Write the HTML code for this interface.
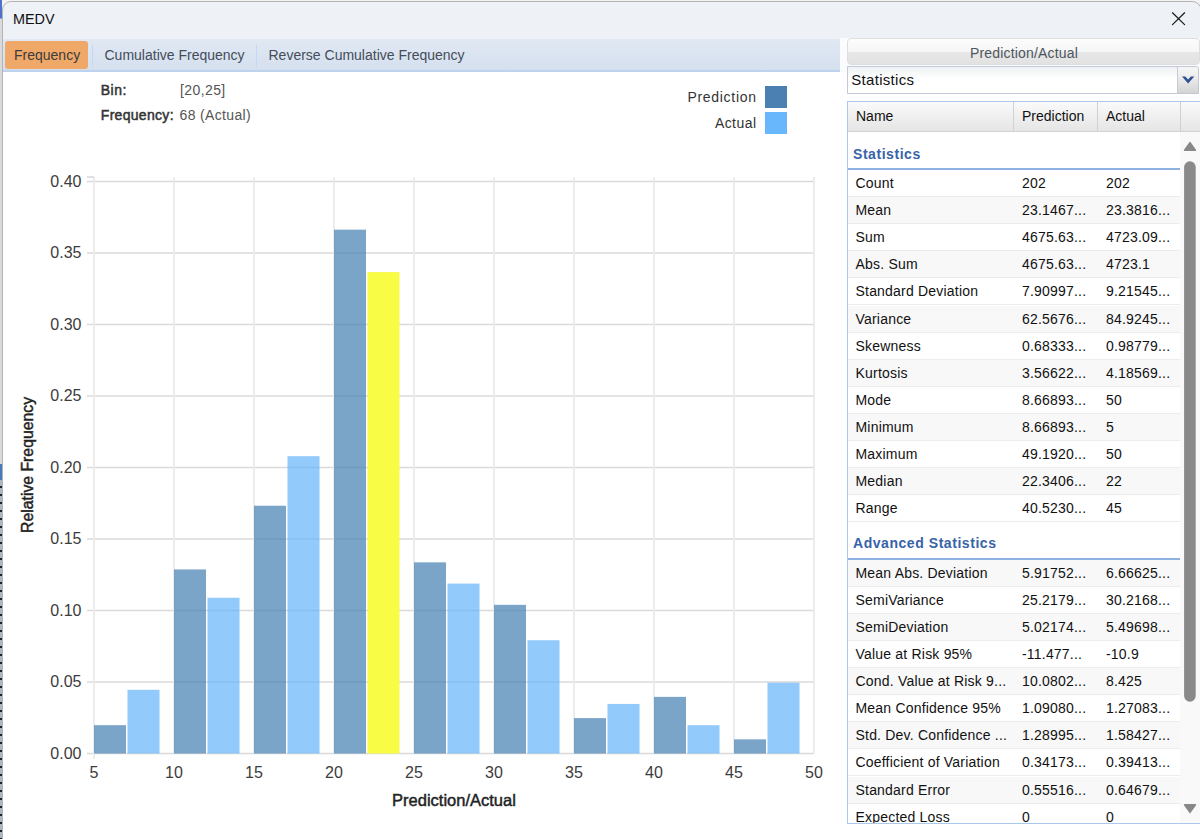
<!DOCTYPE html>
<html><head><meta charset="utf-8"><style>
html,body{margin:0;padding:0;width:1200px;height:839px;overflow:hidden;background:#fff}
body{position:relative;font-family:"Liberation Sans",sans-serif}
.t{position:absolute;white-space:nowrap}
.r{position:absolute}
</style></head><body>
<div class="r" style="left:0px;top:0px;width:1200px;height:839px;background:#f3f3f3;"></div>
<div class="r" style="left:0px;top:0px;width:2px;height:464px;background:linear-gradient(#5070d0 0px,#5070d0 18px,#dadada 19px);"></div>
<div class="r" style="left:0px;top:464px;width:2px;height:16px;background:#4a78b8;"></div>
<div class="r" style="left:0px;top:480px;width:2px;height:359px;background:repeating-linear-gradient(#a9b6c8 0px,#a9b6c8 6px,#222 6px,#222 8px);"></div>
<div class="r" style="left:2px;top:1px;width:1200px;height:850px;background:#eef2f7;border:1px solid #b4b4b4;border-radius:9px 10px 0 0;box-sizing:border-box;"></div>
<div class="t" style="left:12.5px;top:9.43px;font-size:15.5px;line-height:19px;color:#111;font-weight:normal;transform:scaleX(0.93);transform-origin:0 0;">MEDV</div>
<svg class="r" style="left:1170px;top:10px" width="18" height="18" viewBox="0 0 18 18"><path d="M2.5 2.8 L14.6 14.6 M14.6 2.8 L2.5 14.6" stroke="#1a1a1a" stroke-width="1.25" stroke-linecap="round" fill="none"/></svg>
<div class="r" style="left:3px;top:72px;width:1197px;height:767px;background:#fff;"></div>
<div class="r" style="left:840px;top:38px;width:360px;height:34px;background:#fbfcfd;"></div>
<div class="r" style="left:3px;top:39px;width:837px;height:33px;background:linear-gradient(#e0e8f3,#d5e0ef);border-bottom:2px solid #bdd2ec;box-sizing:border-box;"></div>
<div class="r" style="left:5px;top:41px;width:83px;height:28px;background:#f0a868;border-radius:3px;"></div>
<div class="t" style="left:14px;top:47.35px;font-size:14px;line-height:17px;color:#3c3c3c;font-weight:normal;">Frequency</div>
<div class="r" style="left:92px;top:45px;width:1px;height:22px;background:#c4d8f0;"></div>
<div class="t" style="left:104.5px;top:47.35px;font-size:14px;line-height:17px;color:#444c58;font-weight:normal;">Cumulative Frequency</div>
<div class="r" style="left:256px;top:45px;width:1px;height:22px;background:#c4d8f0;"></div>
<div class="t" style="left:268.5px;top:47.35px;font-size:14px;line-height:17px;color:#444c58;font-weight:normal;">Reverse Cumulative Frequency</div>
<div class="t" style="left:100.8px;top:82.15px;font-size:14px;line-height:17px;color:#333;font-weight:normal;-webkit-text-stroke:0.5px #333;letter-spacing:0.45px;">Bin:</div>
<div class="t" style="left:180px;top:82.15px;font-size:14px;line-height:17px;color:#555;font-weight:normal;letter-spacing:0.4px;">[20,25]</div>
<div class="t" style="left:100.8px;top:107.15px;font-size:14px;line-height:17px;color:#333;font-weight:normal;-webkit-text-stroke:0.5px #333;letter-spacing:0.3px;">Frequency:</div>
<div class="t" style="left:179.5px;top:107.15px;font-size:14px;line-height:17px;color:#555;font-weight:normal;letter-spacing:0.35px;">68 (Actual)</div>
<div class="t" style="right:443.29999999999995px;top:88.65px;font-size:14px;line-height:17px;color:#333;font-weight:normal;letter-spacing:0.7px;">Prediction</div>
<div class="t" style="right:443.5px;top:114.65px;font-size:14px;line-height:17px;color:#333;font-weight:normal;letter-spacing:0.45px;">Actual</div>
<div class="r" style="left:765px;top:86px;width:22px;height:22px;background:#4a80b2;"></div>
<div class="r" style="left:765px;top:112px;width:22px;height:22px;background:#68b6fb;"></div>
<svg class="r" style="left:0;top:0" width="1200" height="839"><line x1="87" x2="814" y1="181.50" y2="181.50" stroke="#dadada" stroke-width="1.6"/><line x1="87" x2="814" y1="253.00" y2="253.00" stroke="#dadada" stroke-width="1.6"/><line x1="87" x2="814" y1="324.50" y2="324.50" stroke="#dadada" stroke-width="1.6"/><line x1="87" x2="814" y1="396.00" y2="396.00" stroke="#dadada" stroke-width="1.6"/><line x1="87" x2="814" y1="467.50" y2="467.50" stroke="#dadada" stroke-width="1.6"/><line x1="87" x2="814" y1="539.00" y2="539.00" stroke="#dadada" stroke-width="1.6"/><line x1="87" x2="814" y1="610.50" y2="610.50" stroke="#dadada" stroke-width="1.6"/><line x1="87" x2="814" y1="682.00" y2="682.00" stroke="#dadada" stroke-width="1.6"/><line x1="87" x2="814" y1="753.50" y2="753.50" stroke="#dadada" stroke-width="1.6"/><line x1="94" x2="94" y1="177" y2="759" stroke="#eaeaea" stroke-width="1.8"/><line x1="174" x2="174" y1="177" y2="753" stroke="#eaeaea" stroke-width="1.8"/><line x1="254" x2="254" y1="177" y2="753" stroke="#eaeaea" stroke-width="1.8"/><line x1="334" x2="334" y1="177" y2="753" stroke="#eaeaea" stroke-width="1.8"/><line x1="414" x2="414" y1="177" y2="753" stroke="#eaeaea" stroke-width="1.8"/><line x1="494" x2="494" y1="177" y2="753" stroke="#eaeaea" stroke-width="1.8"/><line x1="574" x2="574" y1="177" y2="753" stroke="#eaeaea" stroke-width="1.8"/><line x1="654" x2="654" y1="177" y2="753" stroke="#eaeaea" stroke-width="1.8"/><line x1="734" x2="734" y1="177" y2="753" stroke="#eaeaea" stroke-width="1.8"/><line x1="814" x2="814" y1="177" y2="753" stroke="#eaeaea" stroke-width="1.8"/><line x1="87" x2="94" y1="177" y2="177" stroke="#dadada" stroke-width="1.6"/><rect x="94" y="725.18" width="32" height="28.32" fill="#4682b4" fill-opacity="0.72"/><rect x="127.5" y="689.79" width="32" height="63.71" fill="#64b4fa" fill-opacity="0.7"/><rect x="174" y="569.44" width="32" height="184.06" fill="#4682b4" fill-opacity="0.72"/><rect x="207.5" y="597.76" width="32" height="155.74" fill="#64b4fa" fill-opacity="0.7"/><rect x="254" y="505.73" width="32" height="247.77" fill="#4682b4" fill-opacity="0.72"/><rect x="287.5" y="456.17" width="32" height="297.33" fill="#64b4fa" fill-opacity="0.7"/><rect x="334" y="229.64" width="32" height="523.86" fill="#4682b4" fill-opacity="0.72"/><rect x="367.5" y="272.11" width="32" height="481.39" fill="#f9fc45" fill-opacity="1"/><rect x="414" y="562.36" width="32" height="191.14" fill="#4682b4" fill-opacity="0.72"/><rect x="447.5" y="583.60" width="32" height="169.90" fill="#64b4fa" fill-opacity="0.7"/><rect x="494" y="604.84" width="32" height="148.66" fill="#4682b4" fill-opacity="0.72"/><rect x="527.5" y="640.23" width="32" height="113.27" fill="#64b4fa" fill-opacity="0.7"/><rect x="574" y="718.10" width="32" height="35.40" fill="#4682b4" fill-opacity="0.72"/><rect x="607.5" y="703.95" width="32" height="49.55" fill="#64b4fa" fill-opacity="0.7"/><rect x="654" y="696.87" width="32" height="56.63" fill="#4682b4" fill-opacity="0.72"/><rect x="687.5" y="725.18" width="32" height="28.32" fill="#64b4fa" fill-opacity="0.7"/><rect x="734" y="739.34" width="32" height="14.16" fill="#4682b4" fill-opacity="0.72"/><rect x="767.5" y="682.71" width="32" height="70.79" fill="#64b4fa" fill-opacity="0.7"/></svg>
<div class="t" style="right:1118.5px;top:171.76px;font-size:16px;line-height:19px;color:#3c3c3c;font-weight:normal;">0.40</div>
<div class="t" style="right:1118.5px;top:243.26px;font-size:16px;line-height:19px;color:#3c3c3c;font-weight:normal;">0.35</div>
<div class="t" style="right:1118.5px;top:314.76px;font-size:16px;line-height:19px;color:#3c3c3c;font-weight:normal;">0.30</div>
<div class="t" style="right:1118.5px;top:386.26px;font-size:16px;line-height:19px;color:#3c3c3c;font-weight:normal;">0.25</div>
<div class="t" style="right:1118.5px;top:457.76px;font-size:16px;line-height:19px;color:#3c3c3c;font-weight:normal;">0.20</div>
<div class="t" style="right:1118.5px;top:529.26px;font-size:16px;line-height:19px;color:#3c3c3c;font-weight:normal;">0.15</div>
<div class="t" style="right:1118.5px;top:600.76px;font-size:16px;line-height:19px;color:#3c3c3c;font-weight:normal;">0.10</div>
<div class="t" style="right:1118.5px;top:672.26px;font-size:16px;line-height:19px;color:#3c3c3c;font-weight:normal;">0.05</div>
<div class="t" style="right:1118.5px;top:743.76px;font-size:16px;line-height:19px;color:#3c3c3c;font-weight:normal;">0.00</div>
<div class="t" style="left:-206px;width:600px;text-align:center;top:762.76px;font-size:16px;line-height:19px;color:#3c3c3c;font-weight:normal;">5</div>
<div class="t" style="left:-126px;width:600px;text-align:center;top:762.76px;font-size:16px;line-height:19px;color:#3c3c3c;font-weight:normal;">10</div>
<div class="t" style="left:-46px;width:600px;text-align:center;top:762.76px;font-size:16px;line-height:19px;color:#3c3c3c;font-weight:normal;">15</div>
<div class="t" style="left:34px;width:600px;text-align:center;top:762.76px;font-size:16px;line-height:19px;color:#3c3c3c;font-weight:normal;">20</div>
<div class="t" style="left:114px;width:600px;text-align:center;top:762.76px;font-size:16px;line-height:19px;color:#3c3c3c;font-weight:normal;">25</div>
<div class="t" style="left:194px;width:600px;text-align:center;top:762.76px;font-size:16px;line-height:19px;color:#3c3c3c;font-weight:normal;">30</div>
<div class="t" style="left:274px;width:600px;text-align:center;top:762.76px;font-size:16px;line-height:19px;color:#3c3c3c;font-weight:normal;">35</div>
<div class="t" style="left:354px;width:600px;text-align:center;top:762.76px;font-size:16px;line-height:19px;color:#3c3c3c;font-weight:normal;">40</div>
<div class="t" style="left:434px;width:600px;text-align:center;top:762.76px;font-size:16px;line-height:19px;color:#3c3c3c;font-weight:normal;">45</div>
<div class="t" style="left:514px;width:600px;text-align:center;top:762.76px;font-size:16px;line-height:19px;color:#3c3c3c;font-weight:normal;">50</div>
<div class="t" style="left:154px;width:600px;text-align:center;top:790.28px;font-size:16.5px;line-height:20px;color:#222;font-weight:normal;-webkit-text-stroke:0.45px #222;">Prediction/Actual</div>
<div class="t" style="left:-40px;top:456px;width:136px;height:18px;font-size:15.8px;line-height:18px;text-align:center;color:#222;-webkit-text-stroke:0.45px #222;transform:rotate(-90deg)">Relative Frequency</div>
<div class="r" style="left:847px;top:38px;width:353px;height:27px;background:linear-gradient(#fcfcfc 0%,#f6f6f6 50%,#e7e7e7 52%,#e2e2e2 100%);border-radius:4px;border:1px solid #dedede;box-sizing:border-box;"></div>
<div class="t" style="left:724px;width:600px;text-align:center;top:44.65px;font-size:14px;line-height:17px;color:#4d5560;font-weight:normal;letter-spacing:0.18px;">Prediction/Actual</div>
<div class="r" style="left:847px;top:66px;width:352px;height:28px;background:linear-gradient(#eef2f2,#fff 45%);border:1px solid #c3c8d6;border-radius:0 3px 0 0;box-sizing:border-box;"></div>
<div class="t" style="left:851.3px;top:70.90px;font-size:15px;line-height:18px;color:#111;font-weight:normal;letter-spacing:0.3px;">Statistics</div>
<div class="r" style="left:1177px;top:67px;width:21px;height:26px;background:linear-gradient(#f6f6f6 0%,#ececec 40%,#d4d4d4 100%);border-left:1px solid #c6cad6;border-radius:0 3px 0 0;box-sizing:border-box;"></div>
<svg class="r" style="left:1180px;top:75px" width="16" height="12" viewBox="0 0 16 12"><path d="M2 1.5 L5.3 1.5 L8.1 4.6 L10.9 1.5 L14.3 1.5 L8.1 8.6 Z" fill="#2d5192"/></svg>
<div class="r" style="left:847px;top:101px;width:360px;height:723px;background:#fff;border:1px solid #a9c9ec;box-sizing:border-box;"></div>
<div class="r" style="left:848px;top:102px;width:352px;height:30px;background:linear-gradient(#fafafa,#e5e5e5);border-bottom:1px solid #d2d2d2;box-sizing:border-box;"></div>
<div class="r" style="left:1013px;top:102px;width:1px;height:29px;background:#d0d0d0;"></div>
<div class="r" style="left:1097px;top:102px;width:1px;height:29px;background:#d0d0d0;"></div>
<div class="r" style="left:1180px;top:102px;width:1px;height:29px;background:#d0d0d0;"></div>
<div class="t" style="left:856px;top:107.85px;font-size:14px;line-height:17px;color:#111;font-weight:normal;">Name</div>
<div class="t" style="left:1022px;top:107.85px;font-size:14px;line-height:17px;color:#111;font-weight:normal;">Prediction</div>
<div class="t" style="left:1106px;top:107.85px;font-size:14px;line-height:17px;color:#111;font-weight:normal;">Actual</div>
<div class="r" style="left:1180px;top:132px;width:20px;height:691px;background:#f9f9f9;"></div>
<svg class="r" style="left:1180px;top:131px" width="20" height="692"><path d="M4.6 19.2 L10 11.6 L15.4 19.2 Z" fill="#888" stroke="#888" stroke-width="1.6" stroke-linejoin="round"/><rect x="4.1" y="30.3" width="11.6" height="540.5" rx="5.8" fill="#898989"/><path d="M4.6 673.8 L15.4 673.8 L10 681.4 Z" fill="#888" stroke="#888" stroke-width="1.6" stroke-linejoin="round"/></svg>
<div class="r" style="left:0;top:0;width:1200px;height:823px;overflow:hidden"><div class="t" style="left:853px;top:145.95px;font-size:14px;line-height:17px;color:#3763a9;font-weight:bold;letter-spacing:0.55px;">Statistics</div><div class="r" style="left:848px;top:168px;width:332px;height:2px;background:#8eb1e2;"></div><div class="r" style="left:848px;top:196px;width:332px;height:1px;background:#ececec;"></div><div class="t" style="left:855.5px;top:174.95px;font-size:14px;line-height:17px;color:#111;font-weight:normal;letter-spacing:0.2px;">Count</div><div class="t" style="left:1022px;top:174.95px;font-size:14px;line-height:17px;color:#111;font-weight:normal;letter-spacing:0.2px;">202</div><div class="t" style="left:1106px;top:174.95px;font-size:14px;line-height:17px;color:#111;font-weight:normal;letter-spacing:0.2px;">202</div><div class="r" style="left:848px;top:197px;width:332px;height:27px;background:#f8f8f8;"></div><div class="r" style="left:848px;top:223px;width:332px;height:1px;background:#ececec;"></div><div class="t" style="left:855.5px;top:202.07px;font-size:14px;line-height:17px;color:#111;font-weight:normal;letter-spacing:0.2px;">Mean</div><div class="t" style="left:1022px;top:202.07px;font-size:14px;line-height:17px;color:#111;font-weight:normal;letter-spacing:0.2px;">23.1467...</div><div class="t" style="left:1106px;top:202.07px;font-size:14px;line-height:17px;color:#111;font-weight:normal;letter-spacing:0.2px;">23.3816...</div><div class="r" style="left:848px;top:250px;width:332px;height:1px;background:#ececec;"></div><div class="t" style="left:855.5px;top:229.19px;font-size:14px;line-height:17px;color:#111;font-weight:normal;letter-spacing:0.2px;">Sum</div><div class="t" style="left:1022px;top:229.19px;font-size:14px;line-height:17px;color:#111;font-weight:normal;letter-spacing:0.2px;">4675.63...</div><div class="t" style="left:1106px;top:229.19px;font-size:14px;line-height:17px;color:#111;font-weight:normal;letter-spacing:0.2px;">4723.09...</div><div class="r" style="left:848px;top:251px;width:332px;height:27px;background:#f8f8f8;"></div><div class="r" style="left:848px;top:277px;width:332px;height:1px;background:#ececec;"></div><div class="t" style="left:855.5px;top:256.31px;font-size:14px;line-height:17px;color:#111;font-weight:normal;letter-spacing:0.2px;">Abs. Sum</div><div class="t" style="left:1022px;top:256.31px;font-size:14px;line-height:17px;color:#111;font-weight:normal;letter-spacing:0.2px;">4675.63...</div><div class="t" style="left:1106px;top:256.31px;font-size:14px;line-height:17px;color:#111;font-weight:normal;letter-spacing:0.2px;">4723.1</div><div class="r" style="left:848px;top:304px;width:332px;height:1px;background:#ececec;"></div><div class="t" style="left:855.5px;top:283.43px;font-size:14px;line-height:17px;color:#111;font-weight:normal;letter-spacing:0.2px;">Standard Deviation</div><div class="t" style="left:1022px;top:283.43px;font-size:14px;line-height:17px;color:#111;font-weight:normal;letter-spacing:0.2px;">7.90997...</div><div class="t" style="left:1106px;top:283.43px;font-size:14px;line-height:17px;color:#111;font-weight:normal;letter-spacing:0.2px;">9.21545...</div><div class="r" style="left:848px;top:306px;width:332px;height:27px;background:#f8f8f8;"></div><div class="r" style="left:848px;top:332px;width:332px;height:1px;background:#ececec;"></div><div class="t" style="left:855.5px;top:310.55px;font-size:14px;line-height:17px;color:#111;font-weight:normal;letter-spacing:0.2px;">Variance</div><div class="t" style="left:1022px;top:310.55px;font-size:14px;line-height:17px;color:#111;font-weight:normal;letter-spacing:0.2px;">62.5676...</div><div class="t" style="left:1106px;top:310.55px;font-size:14px;line-height:17px;color:#111;font-weight:normal;letter-spacing:0.2px;">84.9245...</div><div class="r" style="left:848px;top:359px;width:332px;height:1px;background:#ececec;"></div><div class="t" style="left:855.5px;top:337.67px;font-size:14px;line-height:17px;color:#111;font-weight:normal;letter-spacing:0.2px;">Skewness</div><div class="t" style="left:1022px;top:337.67px;font-size:14px;line-height:17px;color:#111;font-weight:normal;letter-spacing:0.2px;">0.68333...</div><div class="t" style="left:1106px;top:337.67px;font-size:14px;line-height:17px;color:#111;font-weight:normal;letter-spacing:0.2px;">0.98779...</div><div class="r" style="left:848px;top:360px;width:332px;height:27px;background:#f8f8f8;"></div><div class="r" style="left:848px;top:386px;width:332px;height:1px;background:#ececec;"></div><div class="t" style="left:855.5px;top:364.79px;font-size:14px;line-height:17px;color:#111;font-weight:normal;letter-spacing:0.2px;">Kurtosis</div><div class="t" style="left:1022px;top:364.79px;font-size:14px;line-height:17px;color:#111;font-weight:normal;letter-spacing:0.2px;">3.56622...</div><div class="t" style="left:1106px;top:364.79px;font-size:14px;line-height:17px;color:#111;font-weight:normal;letter-spacing:0.2px;">4.18569...</div><div class="r" style="left:848px;top:413px;width:332px;height:1px;background:#ececec;"></div><div class="t" style="left:855.5px;top:391.91px;font-size:14px;line-height:17px;color:#111;font-weight:normal;letter-spacing:0.2px;">Mode</div><div class="t" style="left:1022px;top:391.91px;font-size:14px;line-height:17px;color:#111;font-weight:normal;letter-spacing:0.2px;">8.66893...</div><div class="t" style="left:1106px;top:391.91px;font-size:14px;line-height:17px;color:#111;font-weight:normal;letter-spacing:0.2px;">50</div><div class="r" style="left:848px;top:414px;width:332px;height:27px;background:#f8f8f8;"></div><div class="r" style="left:848px;top:440px;width:332px;height:1px;background:#ececec;"></div><div class="t" style="left:855.5px;top:419.03px;font-size:14px;line-height:17px;color:#111;font-weight:normal;letter-spacing:0.2px;">Minimum</div><div class="t" style="left:1022px;top:419.03px;font-size:14px;line-height:17px;color:#111;font-weight:normal;letter-spacing:0.2px;">8.66893...</div><div class="t" style="left:1106px;top:419.03px;font-size:14px;line-height:17px;color:#111;font-weight:normal;letter-spacing:0.2px;">5</div><div class="r" style="left:848px;top:467px;width:332px;height:1px;background:#ececec;"></div><div class="t" style="left:855.5px;top:446.15px;font-size:14px;line-height:17px;color:#111;font-weight:normal;letter-spacing:0.2px;">Maximum</div><div class="t" style="left:1022px;top:446.15px;font-size:14px;line-height:17px;color:#111;font-weight:normal;letter-spacing:0.2px;">49.1920...</div><div class="t" style="left:1106px;top:446.15px;font-size:14px;line-height:17px;color:#111;font-weight:normal;letter-spacing:0.2px;">50</div><div class="r" style="left:848px;top:468px;width:332px;height:27px;background:#f8f8f8;"></div><div class="r" style="left:848px;top:494px;width:332px;height:1px;background:#ececec;"></div><div class="t" style="left:855.5px;top:473.27px;font-size:14px;line-height:17px;color:#111;font-weight:normal;letter-spacing:0.2px;">Median</div><div class="t" style="left:1022px;top:473.27px;font-size:14px;line-height:17px;color:#111;font-weight:normal;letter-spacing:0.2px;">22.3406...</div><div class="t" style="left:1106px;top:473.27px;font-size:14px;line-height:17px;color:#111;font-weight:normal;letter-spacing:0.2px;">22</div><div class="r" style="left:848px;top:521px;width:332px;height:1px;background:#ececec;"></div><div class="t" style="left:855.5px;top:500.39px;font-size:14px;line-height:17px;color:#111;font-weight:normal;letter-spacing:0.2px;">Range</div><div class="t" style="left:1022px;top:500.39px;font-size:14px;line-height:17px;color:#111;font-weight:normal;letter-spacing:0.2px;">40.5230...</div><div class="t" style="left:1106px;top:500.39px;font-size:14px;line-height:17px;color:#111;font-weight:normal;letter-spacing:0.2px;">45</div><div class="t" style="left:853px;top:535.25px;font-size:14px;line-height:17px;color:#3763a9;font-weight:bold;letter-spacing:0.55px;">Advanced Statistics</div><div class="r" style="left:848px;top:558px;width:332px;height:2px;background:#8eb1e2;"></div><div class="r" style="left:848px;top:560px;width:332px;height:27px;background:#f8f8f8;"></div><div class="r" style="left:848px;top:586px;width:332px;height:1px;background:#ececec;"></div><div class="t" style="left:855.5px;top:564.95px;font-size:14px;line-height:17px;color:#111;font-weight:normal;letter-spacing:0.2px;">Mean Abs. Deviation</div><div class="t" style="left:1022px;top:564.95px;font-size:14px;line-height:17px;color:#111;font-weight:normal;letter-spacing:0.2px;">5.91752...</div><div class="t" style="left:1106px;top:564.95px;font-size:14px;line-height:17px;color:#111;font-weight:normal;letter-spacing:0.2px;">6.66625...</div><div class="r" style="left:848px;top:613px;width:332px;height:1px;background:#ececec;"></div><div class="t" style="left:855.5px;top:592.02px;font-size:14px;line-height:17px;color:#111;font-weight:normal;letter-spacing:0.2px;">SemiVariance</div><div class="t" style="left:1022px;top:592.02px;font-size:14px;line-height:17px;color:#111;font-weight:normal;letter-spacing:0.2px;">25.2179...</div><div class="t" style="left:1106px;top:592.02px;font-size:14px;line-height:17px;color:#111;font-weight:normal;letter-spacing:0.2px;">30.2168...</div><div class="r" style="left:848px;top:614px;width:332px;height:27px;background:#f8f8f8;"></div><div class="r" style="left:848px;top:640px;width:332px;height:1px;background:#ececec;"></div><div class="t" style="left:855.5px;top:619.09px;font-size:14px;line-height:17px;color:#111;font-weight:normal;letter-spacing:0.2px;">SemiDeviation</div><div class="t" style="left:1022px;top:619.09px;font-size:14px;line-height:17px;color:#111;font-weight:normal;letter-spacing:0.2px;">5.02174...</div><div class="t" style="left:1106px;top:619.09px;font-size:14px;line-height:17px;color:#111;font-weight:normal;letter-spacing:0.2px;">5.49698...</div><div class="r" style="left:848px;top:667px;width:332px;height:1px;background:#ececec;"></div><div class="t" style="left:855.5px;top:646.16px;font-size:14px;line-height:17px;color:#111;font-weight:normal;letter-spacing:0.2px;">Value at Risk 95%</div><div class="t" style="left:1022px;top:646.16px;font-size:14px;line-height:17px;color:#111;font-weight:normal;letter-spacing:0.2px;">-11.477...</div><div class="t" style="left:1106px;top:646.16px;font-size:14px;line-height:17px;color:#111;font-weight:normal;letter-spacing:0.2px;">-10.9</div><div class="r" style="left:848px;top:668px;width:332px;height:27px;background:#f8f8f8;"></div><div class="r" style="left:848px;top:694px;width:332px;height:1px;background:#ececec;"></div><div class="t" style="left:855.5px;top:673.23px;font-size:14px;line-height:17px;color:#111;font-weight:normal;letter-spacing:0.2px;">Cond. Value at Risk 9...</div><div class="t" style="left:1022px;top:673.23px;font-size:14px;line-height:17px;color:#111;font-weight:normal;letter-spacing:0.2px;">10.0802...</div><div class="t" style="left:1106px;top:673.23px;font-size:14px;line-height:17px;color:#111;font-weight:normal;letter-spacing:0.2px;">8.425</div><div class="r" style="left:848px;top:721px;width:332px;height:1px;background:#ececec;"></div><div class="t" style="left:855.5px;top:700.30px;font-size:14px;line-height:17px;color:#111;font-weight:normal;letter-spacing:0.2px;">Mean Confidence 95%</div><div class="t" style="left:1022px;top:700.30px;font-size:14px;line-height:17px;color:#111;font-weight:normal;letter-spacing:0.2px;">1.09080...</div><div class="t" style="left:1106px;top:700.30px;font-size:14px;line-height:17px;color:#111;font-weight:normal;letter-spacing:0.2px;">1.27083...</div><div class="r" style="left:848px;top:722px;width:332px;height:27px;background:#f8f8f8;"></div><div class="r" style="left:848px;top:748px;width:332px;height:1px;background:#ececec;"></div><div class="t" style="left:855.5px;top:727.37px;font-size:14px;line-height:17px;color:#111;font-weight:normal;letter-spacing:0.2px;">Std. Dev. Confidence ...</div><div class="t" style="left:1022px;top:727.37px;font-size:14px;line-height:17px;color:#111;font-weight:normal;letter-spacing:0.2px;">1.28995...</div><div class="t" style="left:1106px;top:727.37px;font-size:14px;line-height:17px;color:#111;font-weight:normal;letter-spacing:0.2px;">1.58427...</div><div class="r" style="left:848px;top:775px;width:332px;height:1px;background:#ececec;"></div><div class="t" style="left:855.5px;top:754.44px;font-size:14px;line-height:17px;color:#111;font-weight:normal;letter-spacing:0.2px;">Coefficient of Variation</div><div class="t" style="left:1022px;top:754.44px;font-size:14px;line-height:17px;color:#111;font-weight:normal;letter-spacing:0.2px;">0.34173...</div><div class="t" style="left:1106px;top:754.44px;font-size:14px;line-height:17px;color:#111;font-weight:normal;letter-spacing:0.2px;">0.39413...</div><div class="r" style="left:848px;top:777px;width:332px;height:27px;background:#f8f8f8;"></div><div class="r" style="left:848px;top:803px;width:332px;height:1px;background:#ececec;"></div><div class="t" style="left:855.5px;top:781.51px;font-size:14px;line-height:17px;color:#111;font-weight:normal;letter-spacing:0.2px;">Standard Error</div><div class="t" style="left:1022px;top:781.51px;font-size:14px;line-height:17px;color:#111;font-weight:normal;letter-spacing:0.2px;">0.55516...</div><div class="t" style="left:1106px;top:781.51px;font-size:14px;line-height:17px;color:#111;font-weight:normal;letter-spacing:0.2px;">0.64679...</div><div class="r" style="left:848px;top:830px;width:332px;height:1px;background:#ececec;"></div><div class="t" style="left:855.5px;top:808.58px;font-size:14px;line-height:17px;color:#111;font-weight:normal;letter-spacing:0.2px;">Expected Loss</div><div class="t" style="left:1022px;top:808.58px;font-size:14px;line-height:17px;color:#111;font-weight:normal;letter-spacing:0.2px;">0</div><div class="t" style="left:1106px;top:808.58px;font-size:14px;line-height:17px;color:#111;font-weight:normal;letter-spacing:0.2px;">0</div></div>
</body></html>
